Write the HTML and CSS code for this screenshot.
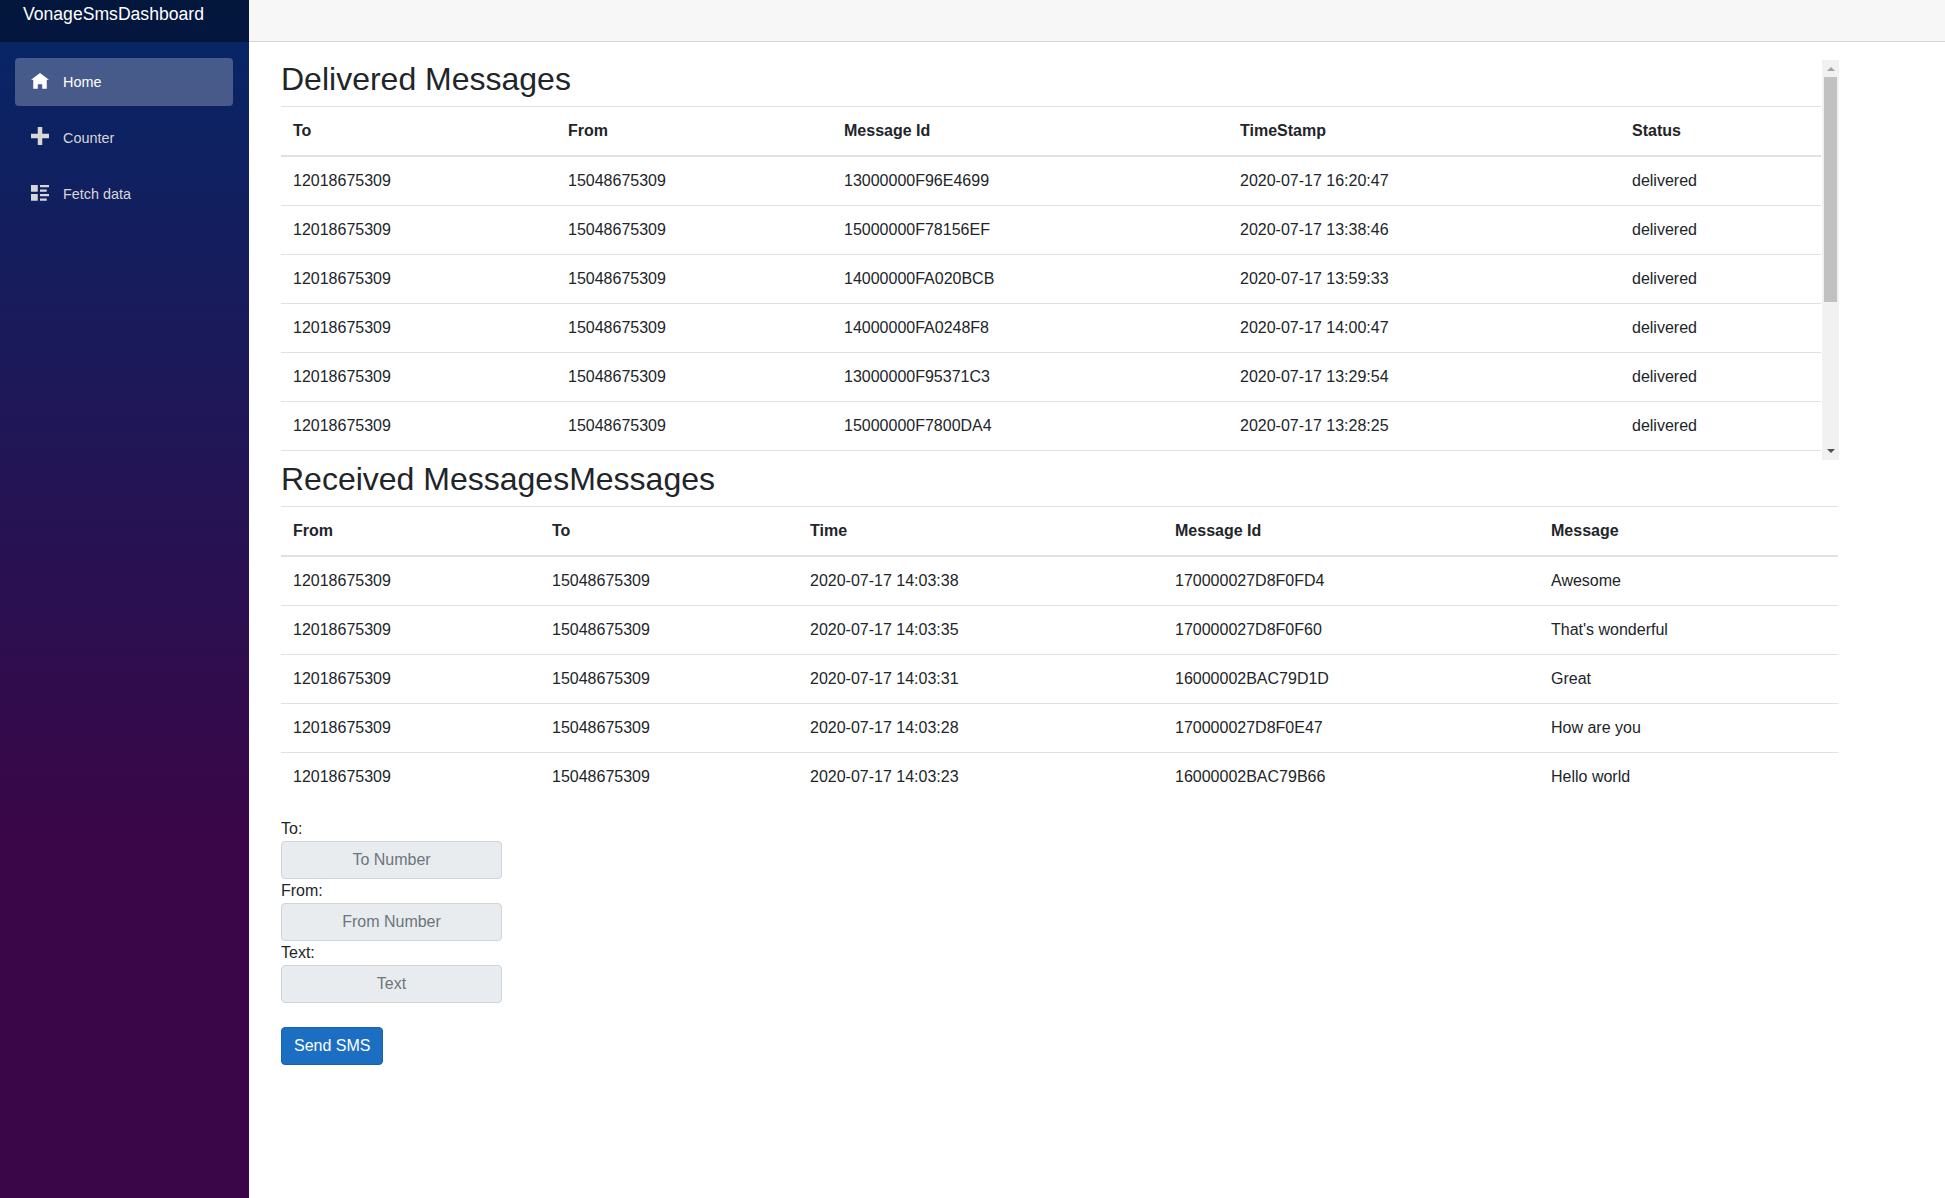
FILE: index.html
```html
<!DOCTYPE html>
<html lang="en">
<head>
    <meta charset="UTF-8">
    <meta name="viewport" content="width=device-width, initial-scale=1.0">
    <title>VonageSmsDashboard</title>
    <link rel="stylesheet" href="styles.css">
</head>
<body>
    <div class="page">
        <div class="sidebar">
            <div class="brand-row">VonageSmsDashboard</div>
            <ul class="nav-list">
                <li class="nav-item">
                    <a class="nav-link active" href="#">
                        <svg class="nav-icon" viewBox="0 0 8 8"><path d="M4 0l-4 3h1v4h2v-2h2v2h2v-4.03l1 .03-4-3z"/></svg>
                        Home
                    </a>
                </li>
                <li class="nav-item">
                    <a class="nav-link" href="#">
                        <svg class="nav-icon icon-plus" viewBox="0 0 8 8"><path d="M3 0v3h-3v2h3v3h2v-3h3v-2h-3v-3h-2z"/></svg>
                        Counter
                    </a>
                </li>
                <li class="nav-item">
                    <a class="nav-link" href="#">
                        <svg class="nav-icon" viewBox="0 0 8 8"><path d="M0 0v3h3v-3h-3zm4 0v1h4v-1h-4zm0 2v1h3v-1h-3zm-4 2v3h3v-3h-3zm4 0v1h4v-1h-4zm0 2v1h3v-1h-3z"/></svg>
                        Fetch data
                    </a>
                </li>
            </ul>
        </div>

        <div class="main">
            <div class="top-row"></div>
            <div class="content">
                <div class="scroll-box">
                    <div class="scroll-body">
                        <h1>Delivered Messages</h1>
                        <table class="table delivered">
                            <colgroup>
                                <col class="d-to"><col class="d-from"><col class="d-id"><col class="d-time"><col>
                            </colgroup>
                            <thead>
                                <tr><th>To</th><th>From</th><th>Message Id</th><th>TimeStamp</th><th>Status</th></tr>
                            </thead>
                            <tbody>
                                <tr><td>12018675309</td><td>15048675309</td><td>13000000F96E4699</td><td>2020-07-17 16:20:47</td><td>delivered</td></tr>
                                <tr><td>12018675309</td><td>15048675309</td><td>15000000F78156EF</td><td>2020-07-17 13:38:46</td><td>delivered</td></tr>
                                <tr><td>12018675309</td><td>15048675309</td><td>14000000FA020BCB</td><td>2020-07-17 13:59:33</td><td>delivered</td></tr>
                                <tr><td>12018675309</td><td>15048675309</td><td>14000000FA0248F8</td><td>2020-07-17 14:00:47</td><td>delivered</td></tr>
                                <tr><td>12018675309</td><td>15048675309</td><td>13000000F95371C3</td><td>2020-07-17 13:29:54</td><td>delivered</td></tr>
                                <tr><td>12018675309</td><td>15048675309</td><td>15000000F7800DA4</td><td>2020-07-17 13:28:25</td><td>delivered</td></tr>
                            </tbody>
                        </table>
                    </div>
                    <div class="scrollbar">
                        <div class="arrow-up"></div>
                        <div class="track"><div class="thumb"></div></div>
                        <div class="arrow-down"></div>
                    </div>
                </div>

                <h1>Received MessagesMessages</h1>
                <table class="table received">
                    <colgroup>
                        <col class="r-from"><col class="r-to"><col class="r-time"><col class="r-id"><col>
                    </colgroup>
                    <thead>
                        <tr><th>From</th><th>To</th><th>Time</th><th>Message Id</th><th>Message</th></tr>
                    </thead>
                    <tbody>
                        <tr><td>12018675309</td><td>15048675309</td><td>2020-07-17 14:03:38</td><td>170000027D8F0FD4</td><td>Awesome</td></tr>
                        <tr><td>12018675309</td><td>15048675309</td><td>2020-07-17 14:03:35</td><td>170000027D8F0F60</td><td>That's wonderful</td></tr>
                        <tr><td>12018675309</td><td>15048675309</td><td>2020-07-17 14:03:31</td><td>16000002BAC79D1D</td><td>Great</td></tr>
                        <tr><td>12018675309</td><td>15048675309</td><td>2020-07-17 14:03:28</td><td>170000027D8F0E47</td><td>How are you</td></tr>
                        <tr><td>12018675309</td><td>15048675309</td><td>2020-07-17 14:03:23</td><td>16000002BAC79B66</td><td>Hello world</td></tr>
                    </tbody>
                </table>

                <form class="sms-form">
                    <label for="to">To:</label>
                    <input id="to" class="form-control" type="text" placeholder="To Number">
                    <label for="from">From:</label>
                    <input id="from" class="form-control" type="text" placeholder="From Number">
                    <label for="text">Text:</label>
                    <input id="text" class="form-control" type="text" placeholder="Text">
                    <button class="btn-primary" type="button">Send SMS</button>
                </form>
            </div>
        </div>
    </div>
</body>
</html>
```

FILE: styles.css
```css
* {
    box-sizing: border-box;
}
html, body {
    margin: 0;
    height: 100%;
}
body {
    font-family: "Liberation Sans", Arial, sans-serif;
    font-size: 16px;
    line-height: 24px;
    color: #212529;
    background-color: #fff;
    overflow: hidden;
}
.page {
    display: flex;
    height: 100%;
}

/* sidebar */
.sidebar {
    width: 249px;
    flex: none;
    background-image: linear-gradient(180deg, #052767 0%, #3a0647 70%);
}
.brand-row {
    height: 42px;
    padding-left: 23px;
    font-size: 17.6px;
    line-height: 28px;
    color: #fff;
    background-color: rgba(0, 0, 0, 0.4);
}
.nav-list {
    list-style: none;
    margin: 0;
    padding: 16px 16px 0 15px;
}
.nav-item {
    padding-bottom: 8px;
    font-size: 14.4px;
}
.nav-link {
    display: flex;
    align-items: center;
    height: 48px;
    padding-left: 16px;
    border-radius: 4px;
    color: #d7d7d7;
    text-decoration: none;
}
.nav-link.active {
    background-color: rgba(255, 255, 255, 0.25);
    color: #fff;
}
.nav-icon {
    width: 18px;
    height: 18px;
    margin-right: 14px;
    fill: currentColor;
}
.icon-plus {
    margin-top: -4px;
}

/* main area */
.main {
    flex: 1;
    min-width: 0;
}
.top-row {
    height: 42px;
    background-color: #f7f7f7;
    border-bottom: 1px solid #d6d5d5;
}
.content {
    width: 1589px;
    padding: 18px 0 0 32px;
}
h1 {
    margin: 0 0 8px;
    font-size: 32px;
    font-weight: 400;
    line-height: 38px;
}

/* tables */
.table {
    width: 100%;
    border-collapse: collapse;
    table-layout: fixed;
}
.table th, .table td {
    padding: 12px;
    text-align: left;
    vertical-align: top;
    border-top: 1px solid #dee2e6;
}
.table thead th {
    border-bottom: 2px solid #dee2e6;
    font-weight: 700;
}
.d-to { width: 275px; }
.d-from { width: 276px; }
.d-id { width: 396px; }
.d-time { width: 392px; }
.r-from { width: 259px; }
.r-to { width: 258px; }
.r-time { width: 365px; }
.r-id { width: 376px; }

.scroll-box {
    display: flex;
    height: 400px;
    margin-right: -1px;
}
.scroll-body {
    flex: 1;
    min-width: 0;
    overflow: hidden;
}
.delivered tbody {
    border-bottom: 1px solid #dee2e6;
}

/* scrollbar */
.scrollbar {
    width: 17px;
    margin-left: 1px;
    flex: none;
    display: flex;
    flex-direction: column;
    background-color: #f1f1f1;
}
.track {
    flex: 1;
    padding: 0 2px;
}
.thumb {
    height: 225px;
    background-color: #c1c1c1;
}
.arrow-up, .arrow-down {
    height: 17px;
    width: 0;
    margin: 0 auto;
    border-left: 4px solid transparent;
    border-right: 4px solid transparent;
}
.arrow-up {
    border-bottom: 4px solid #a3a3a3;
    height: 4px;
    margin-top: 7px;
    margin-bottom: 6px;
}
.arrow-down {
    border-top: 4px solid #505050;
    height: 4px;
    margin-top: 6px;
    margin-bottom: 7px;
}

/* sms form */
.sms-form {
    margin-top: 16px;
    width: 221px;
}
.sms-form label {
    display: block;
}
.form-control {
    display: block;
    width: 100%;
    height: 38px;
    padding: 6px 12px;
    font-family: inherit;
    font-size: 16px;
    text-align: center;
    color: #495057;
    background-color: #e9ecef;
    border: 1px solid #ced4da;
    border-radius: 4px;
}
.form-control::placeholder {
    color: #6c757d;
    opacity: 1;
}
.btn-primary {
    display: block;
    margin-top: 24px;
    height: 38px;
    padding: 6px 12px;
    font-family: inherit;
    font-size: 16px;
    color: #fff;
    background-color: #1b6ec2;
    border: 1px solid #1861ac;
    border-radius: 4px;
}
```
